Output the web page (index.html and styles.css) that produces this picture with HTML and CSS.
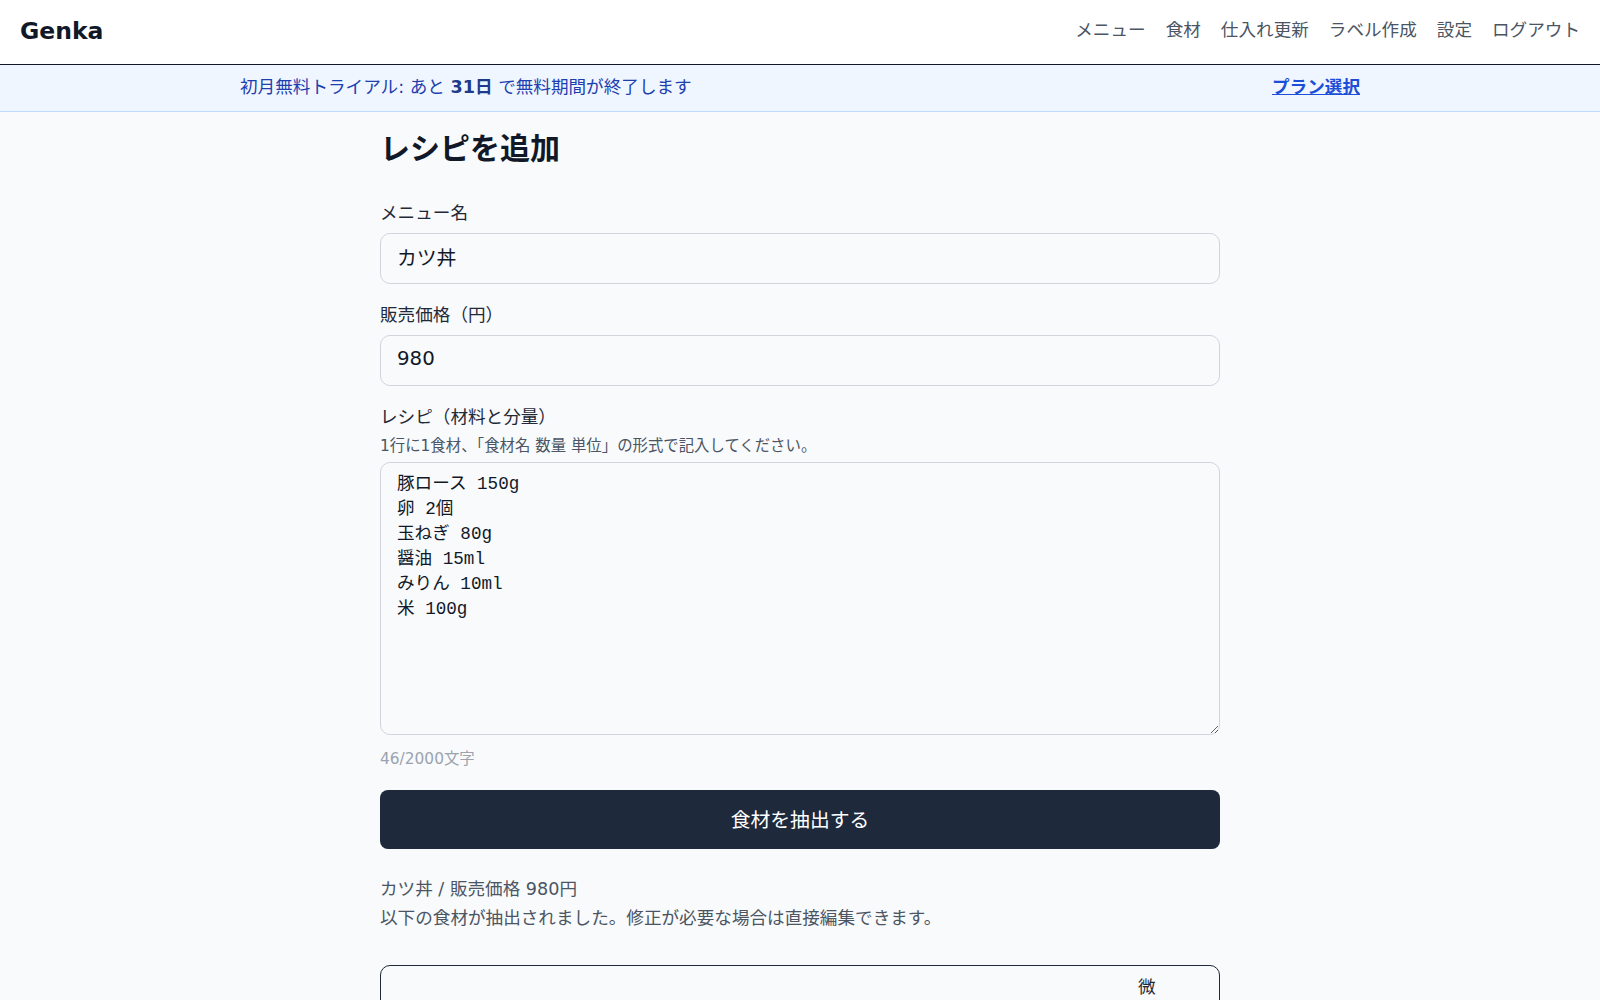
FILE: index.html
```html
<!DOCTYPE html>
<html lang="ja">
<head>
  <meta charset="UTF-8">
  <meta name="viewport" content="width=device-width, initial-scale=1.0">
  <title>レシピを追加 - Genka</title>
  <link rel="stylesheet" href="styles.css">
</head>
<body>
  <header class="site-header">
    <div class="logo">Genka</div>
    <nav class="nav">
      <a href="#">メニュー</a>
      <a href="#">食材</a>
      <a href="#">仕入れ更新</a>
      <a href="#">ラベル作成</a>
      <a href="#">設定</a>
      <a href="#">ログアウト</a>
    </nav>
  </header>

  <div class="trial-bar">
    <div class="trial-inner">
      <p class="trial-text">初月無料トライアル: あと <strong>31日</strong> で無料期間が終了します</p>
      <a href="#" class="plan-link">プラン選択</a>
    </div>
  </div>

  <main class="container">
    <h1>レシピを追加</h1>

    <label class="field-label" for="menuName">メニュー名</label>
    <input type="text" id="menuName" class="text-input" value="カツ丼">

    <label class="field-label" for="price">販売価格（円）</label>
    <input type="text" id="price" class="text-input" value="980">

    <label class="field-label" for="recipe">レシピ（材料と分量）</label>
    <p class="hint">1行に1食材、「食材名 数量 単位」の形式で記入してください。</p>
    <textarea id="recipe" class="recipe-input">豚ロース 150g
卵 2個
玉ねぎ 80g
醤油 15ml
みりん 10ml
米 100g</textarea>
    <p class="char-count">46/2000文字</p>

    <button class="primary-btn">食材を抽出する</button>

    <div class="result">
      <p>カツ丼 / 販売価格 980円</p>
      <p>以下の食材が抽出されました。修正が必要な場合は直接編集できます。</p>
    </div>

    <div class="table-box">
      <div class="table-head">
        <span class="col-adjust">微調整</span>
      </div>
    </div>
  </main>
</body>
</html>
```

FILE: styles.css
```css
body {
  font-family: 'DejaVu Sans', 'Noto Sans CJK JP', sans-serif;
  margin: 0;
  background-color: #f8fafc;
  color: #1f2937;
}
.site-header {
  display: flex;
  align-items: center;
  justify-content: space-between;
  height: 64px;
  padding: 0 20px;
  background: #fff;
  border-bottom: 1px solid #111827;
}
.logo {
  font-size: 23.5px;
  font-weight: bold;
  color: #111827;
  margin-top: -2px;
}
.nav {
  display: flex;
  gap: 20px;
  margin-top: -8px;
}
.nav a {
  font-size: 17.6px;
  color: #4b5563;
  text-decoration: none;
}
.trial-bar {
  background: #eff6ff;
  border-bottom: 1px solid #bfdbfe;
}
.trial-inner {
  max-width: 1120px;
  margin: auto;
  box-sizing: border-box;
  height: 46px;
  padding-bottom: 5px;
  display: flex;
  align-items: center;
  justify-content: space-between;
}
.trial-text {
  margin: 0;
  font-size: 17.6px;
  color: #1e40af;
}
.trial-text strong {
  color: #1e3a8a;
}
.plan-link {
  font-size: 17.6px;
  font-weight: bold;
  color: #1d4ed8;
  text-decoration: underline;
}
.container {
  max-width: 840px;
  margin: auto;
  padding: 19px 0 0;
}
h1 {
  font-size: 30px;
  line-height: 36px;
  margin: 0 0 33px;
  color: #111827;
}
.field-label {
  display: block;
  font-size: 17.6px;
  line-height: 26px;
  margin-bottom: 7px;
}
.text-input {
  display: block;
  box-sizing: border-box;
  width: 100%;
  height: 51px;
  padding: 0 16px 4px;
  margin: 0 0 18px;
  font-family: inherit;
  font-size: 19.8px;
  color: #111827;
  background: #f8fafc;
  border: 1px solid #d1d5db;
  border-radius: 10px;
}
.hint {
  font-size: 15.4px;
  line-height: 22px;
  color: #4b5563;
  margin: -2px 0 5px;
}
.recipe-input {
  display: block;
  box-sizing: border-box;
  width: 100%;
  height: 273px;
  padding: 9px 16px;
  font-family: 'Liberation Mono', 'Noto Sans CJK JP', monospace;
  font-size: 17.6px;
  line-height: 25px;
  color: #111827;
  background: #f8fafc;
  border: 1px solid #d1d5db;
  border-radius: 10px;
}
.char-count {
  font-size: 15.4px;
  line-height: 22px;
  color: #9ca3af;
  margin: 13px 0 20px;
}
.primary-btn {
  display: block;
  width: 100%;
  height: 59px;
  padding-bottom: 3px;
  border: none;
  border-radius: 8px;
  background-color: #1e293b;
  color: #fff;
  font-family: inherit;
  font-size: 19.8px;
  cursor: pointer;
}
.result {
  margin-top: 27px;
  color: #4b5563;
  font-size: 17.6px;
}
.result p {
  margin: 0 0 3px;
  line-height: 26px;
}
.table-box {
  margin-top: 34px;
  border: 1.5px solid #1f2937;
  border-radius: 10px;
  min-height: 80px;
}
.table-head {
  display: flex;
  justify-content: flex-end;
  padding: 8px 63px 0 0;
}
.col-adjust {
  width: 18px;
  font-size: 17.6px;
  line-height: 26px;
  color: #1f2937;
}
```
